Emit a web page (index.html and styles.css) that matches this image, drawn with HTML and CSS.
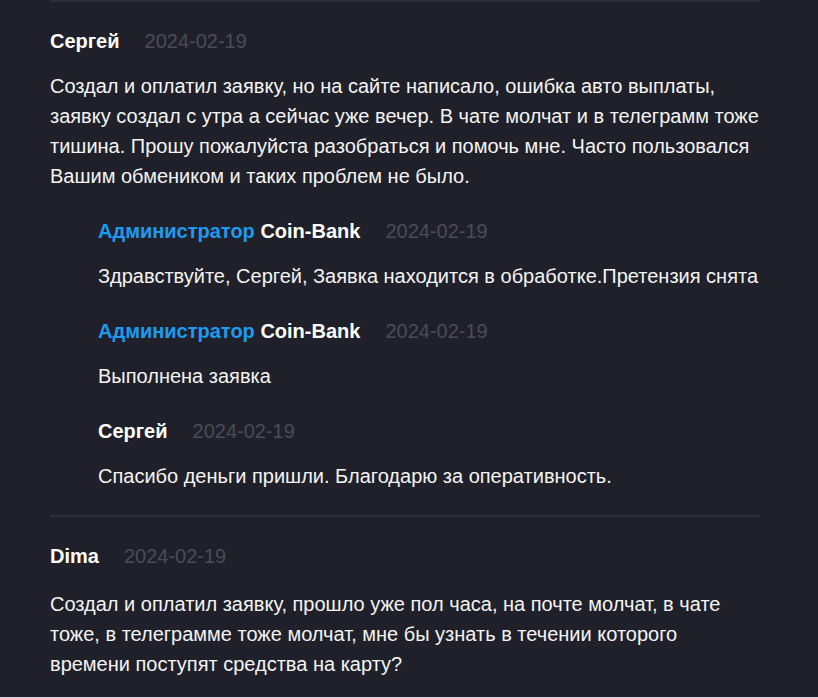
FILE: index.html
```html
<!DOCTYPE html>
<html lang="ru">
<head>
<meta charset="utf-8">
<link rel="stylesheet" href="styles.css">
</head>
<body>
<div class="page">
  <div class="comments">
    <div class="comment">
      <div class="head"><span class="name">Сергей</span><span class="date">2024-02-19</span></div>
      <p class="text">Создал и оплатил заявку, но на сайте написало, ошибка авто выплаты, заявку создал с утра а сейчас уже вечер. В чате молчат и в телеграмм тоже тишина. Прошу пожалуйста разобраться и помочь мне. Часто пользовался Вашим обмеником и таких проблем не было.</p>
      <div class="replies">
        <div class="reply">
          <div class="head"><span class="name"><span class="role">Администратор</span> Coin-Bank</span><span class="date">2024-02-19</span></div>
          <p class="text">Здравствуйте, Сергей, Заявка находится в обработке.Претензия снята</p>
        </div>
        <div class="reply">
          <div class="head"><span class="name"><span class="role">Администратор</span> Coin-Bank</span><span class="date">2024-02-19</span></div>
          <p class="text">Выполнена заявка</p>
        </div>
        <div class="reply">
          <div class="head"><span class="name">Сергей</span><span class="date">2024-02-19</span></div>
          <p class="text">Спасибо деньги пришли. Благодарю за оперативность.</p>
        </div>
      </div>
    </div>
    <div class="comment comment-last">
      <div class="head"><span class="name">Dima</span><span class="date">2024-02-19</span></div>
      <p class="text">Создал и оплатил заявку, прошло уже пол часа, на почте молчат, в чате тоже, в телеграмме тоже молчат, мне бы узнать в течении которого времени поступят средства на карту?</p>
    </div>
  </div>
  <div class="after"></div>
</div>
</body>
</html>
```

FILE: styles.css
```css
* { box-sizing: border-box; }
html, body { margin: 0; padding: 0; }
body {
  background: #1f2029;
  font-family: "Liberation Sans", Arial, sans-serif;
  color: #ffffff;
}
.page { width: 818px; }
.comments {
  margin-left: 50px;
  width: 710px;
  padding-bottom: 18px;
}
.comment {
  border-top: 2px solid #2c2d37;
  padding: 24px 0 24px;
}
.comment-last { padding-bottom: 0; }
.comment-last > .head { margin-bottom: 18px; }
.head {
  display: flex;
  align-items: baseline;
  gap: 25px;
  line-height: 30px;
  margin-bottom: 15px;
}
.name {
  font-weight: 700;
  font-size: 20px;
  color: #ffffff;
}
.role { color: #1d9bf0; }
.date {
  font-size: 20px;
  color: #4a4c5a;
}
.text {
  margin: 0;
  font-size: 20px;
  line-height: 30px;
  color: #f4f4f4;
}
.replies {
  padding-left: 48px;
  display: flex;
  flex-direction: column;
  gap: 25px;
  margin-top: 25px;
}
.after {
  height: 4px;
  background: #d4d4d6;
}
```
